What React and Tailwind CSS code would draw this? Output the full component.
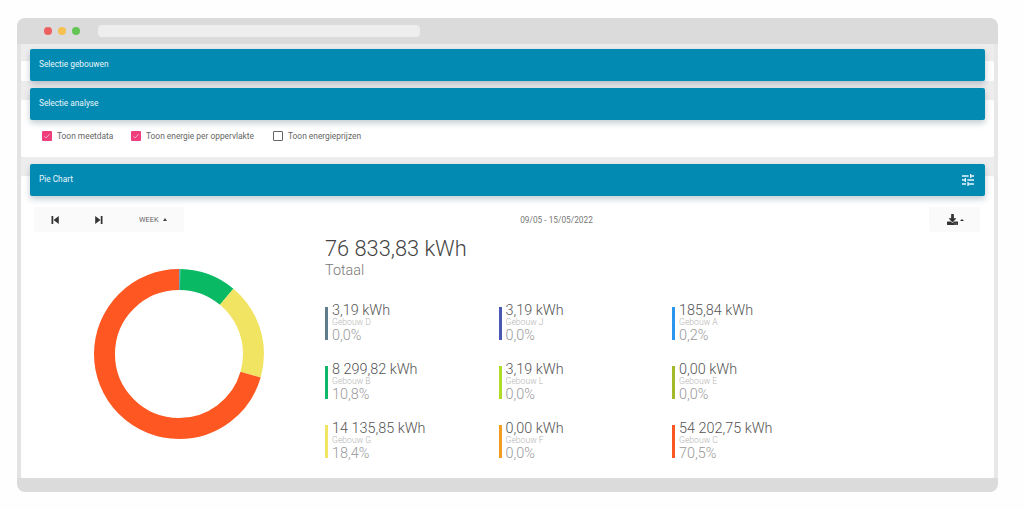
import React from "react";
import { FaDownload } from "react-icons/fa";

const stats = [
  { v: "3,19 kWh", n: "Gebouw D", p: "0,0%", c: "bg-[#607d8b]" },
  { v: "3,19 kWh", n: "Gebouw J", p: "0,0%", c: "bg-[#4a58b5]" },
  { v: "185,84 kWh", n: "Gebouw A", p: "0,2%", c: "bg-[#2b96ee]" },
  { v: "8 299,82 kWh", n: "Gebouw B", p: "10,8%", c: "bg-[#0fb76b]" },
  { v: "3,19 kWh", n: "Gebouw L", p: "0,0%", c: "bg-[#aedc27]" },
  { v: "0,00 kWh", n: "Gebouw E", p: "0,0%", c: "bg-[#a2b92a]" },
  { v: "14 135,85 kWh", n: "Gebouw G", p: "18,4%", c: "bg-[#f2e564]" },
  { v: "0,00 kWh", n: "Gebouw F", p: "0,0%", c: "bg-[#f39c1f]" },
  { v: "54 202,75 kWh", n: "Gebouw C", p: "70,5%", c: "bg-[#fb5722]" },
];

const slices = [
  [0.24, "#6f9fc0"],
  [10.8, "#0ab964"],
  [18.4, "#f1e463"],
  [70.56, "#fe5722"],
];

function Ring() {
  const r = 74.5;
  const circ = 2 * Math.PI * r;
  let off = 0;
  return (
    <svg width="170" height="170" viewBox="0 0 170 170" className="block">
      <g transform="rotate(-90 85 85)">
        {slices.map(([pct, col]) => {
          const len = (pct / 100) * circ;
          const el = (
            <circle
              key={col}
              cx="85"
              cy="85"
              r={r}
              fill="none"
              stroke={col}
              strokeWidth="21"
              strokeDasharray={`${len} ${circ - len}`}
              strokeDashoffset={-off}
            />
          );
          off += len;
          return el;
        })}
      </g>
    </svg>
  );
}

function Header({ title, children }) {
  return (
    <div className="relative -mt-[12px] mx-[9px] h-[32px] rounded-[2px] bg-[#028ab3] shadow-[0_3px_6px_rgba(0,50,80,0.25)] flex items-center justify-between pl-[9px] pr-[9px] text-[#eaf6fa] text-[8.3px]">
      <span className="-mt-[1px]">{title}</span>
      {children}
    </div>
  );
}

function Check({ checked, label, className }) {
  return (
    <div className={`flex items-center gap-[5px] ${className}`}>
      {checked ? (
        <span className="w-[10px] h-[10px] rounded-[1px] bg-[#ee3f7c] flex items-center justify-center">
          <svg width="8" height="8" viewBox="0 0 24 24" fill="none" stroke="#fbd" strokeWidth="2.5">
            <path d="M4 12.5l5.5 5.5L20 6" />
          </svg>
        </span>
      ) : (
        <span className="w-[10px] h-[10px] rounded-[1px] border-[1.5px] border-[#666]" />
      )}
      <span className="text-[8.4px] text-[#666] leading-none">{label}</span>
    </div>
  );
}

function Stat({ v, n, p, c }) {
  return (
    <div className="flex h-[33px]">
      <div className={`w-[3px] h-[33px] ${c}`} />
      <div className="ml-[4px] -mt-[3px] font-light whitespace-nowrap">
        <div className="text-[14.4px] leading-[14px] text-[#555]">{v}</div>
        <div className="text-[8.6px] leading-[9px] text-[#b5b5b5]">{n}</div>
        <div className="mt-[1px] text-[14.4px] leading-[16px] text-[#999]">{p}</div>
      </div>
    </div>
  );
}

export default function App() {
  return (
    <div className="w-[1024px] h-[510px] bg-[#fefefe] pt-[18px] pl-[17px] overflow-hidden font-['Roboto',sans-serif]">
      <div className="w-[981px] h-[474px] rounded-[8px] bg-[#dcdbdc] overflow-hidden flex flex-col">
        <div className="h-[26px] flex items-center pl-[27px] shrink-0">
          <span className="w-[8px] h-[8px] rounded-full bg-[#ee6060]" />
          <span className="w-[8px] h-[8px] rounded-full bg-[#f5c04f] ml-[6px]" />
          <span className="w-[8px] h-[8px] rounded-full bg-[#62c554] ml-[6px]" />
          <span className="w-[322px] h-[12px] rounded-[4px] bg-[#eeeeee] ml-[18px]" />
        </div>
        <div className="h-[434px] mx-[4px] px-0 bg-[#eeedee] shrink-0 flex flex-col shadow-[-4px_0_0_#e4e3e4,4px_0_0_#e9e8e9]">
          <section className="mt-[17px] h-[20px] bg-white rounded-[2px] shrink-0">
            <Header title="Selectie gebouwen" />
          </section>
          <section className="mt-[19px] h-[57px] bg-white rounded-[2px] shrink-0">
            <Header title="Selectie analyse" />
            <div className="flex mt-[11px] pl-[21px]">
              <Check checked label="Toon meetdata" className="w-[89px]" />
              <Check checked label="Toon energie per oppervlakte" className="w-[142px]" />
              <Check label="Toon energieprijzen" />
            </div>
          </section>
          <section className="mt-[19px] h-[302px] bg-white rounded-[2px] shrink-0">
            <Header title="Pie Chart">
              <svg width="16" height="16" viewBox="0 0 24 24" fill="#eaf6fa">
                <path d="M3 17v2h6v-2H3zM3 5v2h10V5H3zm10 16v-2h8v-2h-8v-2h-2v6h2zM7 9v2H3v2h4v2h2V9H7zm14 4v-2H11v2h10zm-6-4h2V7h4V5h-4V3h-2v6z" />
              </svg>
            </Header>
            <div className="flex items-center justify-between mt-[11px] ml-[13px] mr-[14px] h-[25px]">
              <div className="flex items-center w-[150px] h-[25px] bg-[#fafafa] rounded-[2px]">
                <span className="w-[43px] flex justify-center">
                  <svg width="14" height="14" viewBox="0 0 24 24" fill="#333" className="-ml-[2px]">
                    <path d="M6 5h3v14H6zm3.5 7l9 7V5z" />
                  </svg>
                </span>
                <span className="w-[43px] flex justify-center">
                  <svg width="14" height="14" viewBox="0 0 24 24" fill="#333" className="ml-[1px]">
                    <path d="M5.5 19l9-7-9-7v14zM15 5v14h3V5h-3z" />
                  </svg>
                </span>
                <span className="ml-[19px] text-[7.4px] text-[#666]">WEEK</span>
                <span className="ml-[4px] w-0 h-0 border-x-[2.5px] border-x-transparent border-b-[3px] border-b-[#444]" />
              </div>
              <span className="text-[8.3px] text-[#777] mt-[1px]">09/05 - 15/05/2022</span>
              <div className="w-[51px] h-[25px] bg-[#fafafa] rounded-[2px] flex items-center pl-[18px]">
                <FaDownload className="w-[11px] h-[11px] text-[#333]" />
                <span className="ml-[2px] w-0 h-0 border-x-[2px] border-x-transparent border-b-[2px] border-b-[#333]" />
              </div>
            </div>
            <div className="flex">
              <div className="w-[304px] pl-[73px] pt-[36.5px] shrink-0">
                <Ring />
              </div>
              <div className="font-light">
                <div className="mt-[5px] text-[21.8px] leading-[24px] text-[#444] whitespace-nowrap">76 833,83 kWh</div>
                <div className="mt-[1px] text-[14.4px] leading-[18px] text-[#777]">Totaal</div>
                <div className="mt-[27px] grid grid-cols-[173.5px_173.5px_173.5px] gap-y-[26px]">
                  {stats.map((s) => (
                    <Stat key={s.n} {...s} />
                  ))}
                </div>
              </div>
            </div>
          </section>
        </div>
      </div>
    </div>
  );
}
